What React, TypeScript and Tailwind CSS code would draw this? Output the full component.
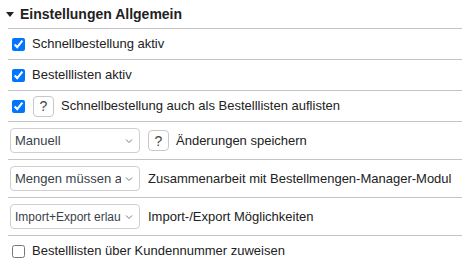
import React, { useState } from 'react';

const Chevron = () => (
  <svg width="8" height="5" viewBox="0 0 8 5" className="pointer-events-none absolute right-[7px] top-1/2 -translate-y-1/2">
    <path d="M1 1l3 3 3-3" fill="none" stroke="#777" strokeWidth="1" />
  </svg>
);

const HelpButton = () => (
  <button
    type="button"
    className="flex h-[21px] w-[21px] shrink-0 items-center justify-center rounded-[4px] border border-[#c8c8c8] bg-white text-[14px] leading-none text-[#444]"
  >
    ?
  </button>
);

interface SelectProps {
  value: string;
  options: string[];
  small?: boolean;
  onChange: (v: string) => void;
}

const Select: React.FC<SelectProps> = ({ value, options, small, onChange }) => (
  <div className="relative w-[130px] shrink-0">
    <select
      value={value}
      onChange={e => onChange(e.target.value)}
      className={`h-[25px] w-full appearance-none overflow-hidden whitespace-nowrap rounded-[4px] border border-[#cfcfcf] bg-white pl-[4px] pr-[18px] text-[#3a3f4a] outline-none ${
        small ? 'text-[12px]' : 'text-[13px]'
      }`}
      style={{ textOverflow: 'clip' }}
    >
      {options.map(o => (
        <option key={o} value={o}>
          {o}
        </option>
      ))}
    </select>
    <Chevron />
  </div>
);

const Row: React.FC<{ children: React.ReactNode; tall?: boolean }> = ({ children, tall }) => (
  <div className={`flex items-center border-t border-[#c4c4c4] ${tall ? 'h-[38px]' : 'h-[31px]'}`}>
    {children}
  </div>
);

export default function App() {
  const [settings, setSettings] = useState({
    quickOrder: true,
    orderLists: true,
    quickAsList: true,
    byCustomer: false,
  });
  const [saveMode, setSaveMode] = useState('Manuell');
  const [qtyMode, setQtyMode] = useState('Mengen müssen auch');
  const [ioMode, setIoMode] = useState('Import+Export erlauben');

  const toggle = (key: keyof typeof settings) =>
    setSettings(prev => ({ ...prev, [key]: !prev[key] }));

  return (
    <div className="w-[462px] bg-white text-[13px] text-[#222]" style={{ fontFamily: '"Liberation Sans", Arial, sans-serif' }}>
      {/* Header */}
      <div className="flex h-[28px] items-center pl-[6px]">
        <svg width="8" height="5" viewBox="0 0 8 5" className="mr-[6px]">
          <path d="M0 0h8L4 5z" fill="#222" />
        </svg>
        <span className="text-[14px] font-bold">Einstellungen Allgemein</span>
      </div>

      <div className="ml-[8px]">
        <Row>
          <label className="flex items-center">
            <input type="checkbox" checked={settings.quickOrder} onChange={() => toggle('quickOrder')} className="ml-[4px] mr-[7px] h-[13px] w-[13px]" />
            Schnellbestellung aktiv
          </label>
        </Row>
        <Row>
          <label className="flex items-center">
            <input type="checkbox" checked={settings.orderLists} onChange={() => toggle('orderLists')} className="ml-[4px] mr-[7px] h-[13px] w-[13px]" />
            Bestelllisten aktiv
          </label>
        </Row>
        <Row>
          <input type="checkbox" checked={settings.quickAsList} onChange={() => toggle('quickAsList')} className="ml-[4px] mr-[8px] h-[13px] w-[13px]" />
          <HelpButton />
          <span className="ml-[7px]">Schnellbestellung auch als Bestelllisten auflisten</span>
        </Row>
        <Row tall>
          <div className="ml-[2px]">
            <Select value={saveMode} options={['Manuell', 'Automatisch']} onChange={setSaveMode} />
          </div>
          <div className="ml-[8px]">
            <HelpButton />
          </div>
          <span className="ml-[7px]">Änderungen speichern</span>
        </Row>
        <Row tall>
          <div className="ml-[2px]">
            <Select value={qtyMode} options={['Mengen müssen auch', 'Mengen optional']} onChange={setQtyMode} />
          </div>
          <span className="ml-[8px]">Zusammenarbeit mit Bestellmengen-Manager-Modul</span>
        </Row>
        <Row tall>
          <div className="ml-[2px]">
            <Select small value={ioMode} options={['Import+Export erlauben', 'Nur Import', 'Nur Export']} onChange={setIoMode} />
          </div>
          <span className="ml-[8px]">Import-/Export Möglichkeiten</span>
        </Row>
        <Row>
          <label className="flex items-center">
            <input type="checkbox" checked={settings.byCustomer} onChange={() => toggle('byCustomer')} className="ml-[4px] mr-[7px] h-[13px] w-[13px]" />
            Bestelllisten über Kundennummer zuweisen
          </label>
        </Row>
      </div>
    </div>
  );
}
